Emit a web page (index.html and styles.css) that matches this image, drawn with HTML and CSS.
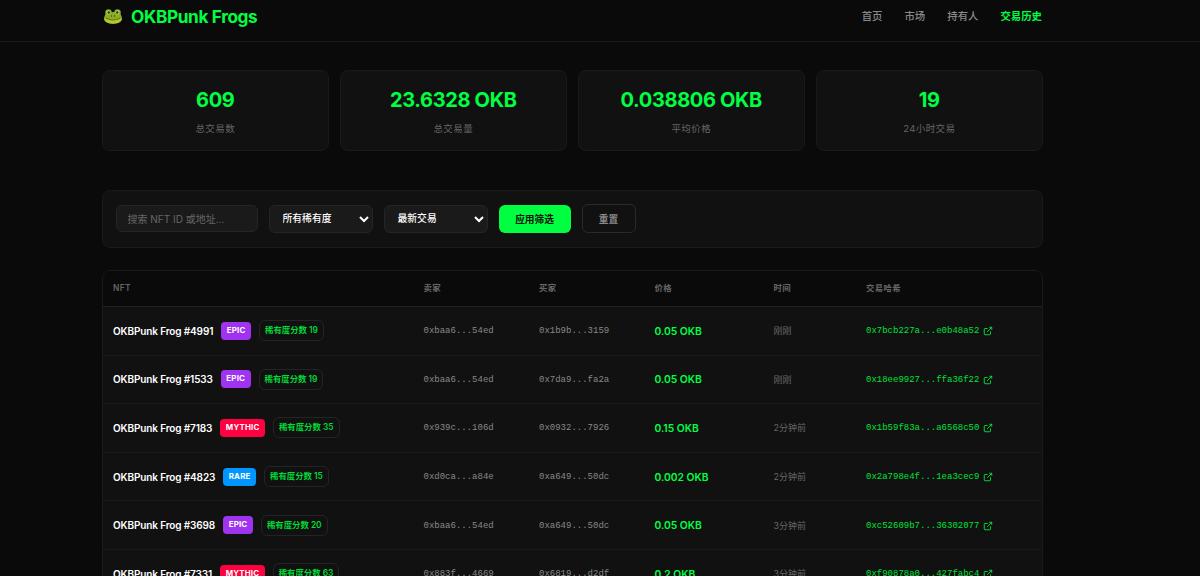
FILE: index.html
```html
<!DOCTYPE html>
<html lang="zh-CN">
	<head>
		<meta charset="UTF-8">
		<title>OKBPunk Frogs</title>
		<link rel="stylesheet" href="styles.css">
	</head>
	<body>
		<svg class="symbols">
			<symbol id="link" viewBox="0 0 24 24">
				<path d="M18 13v6a2 2 0 0 1-2 2H5a2 2 0 0 1-2-2V8a2 2 0 0 1 2-2h6M15 3h6v6M10 14L21 3"/>
			</symbol>
		</svg>
		<header class="header">
			<div class="container nav">
				<div class="logo">
					<svg class="frog" viewBox="0 0 36 30">
						<circle cx="9" cy="7" r="6.5" fill="#86ad28"/>
						<circle cx="27" cy="7" r="6.5" fill="#86ad28"/>
						<path d="M3 10Q18 2 33 10Q36 16 36 20C33 33 3 33 0 20Q0 16 3 10" fill="#8dac25"/>
						<path d="M0 19Q18 27 36 19Q34 29 18 29Q2 29 0 19" fill="#b5c82e"/>
						<circle cx="9" cy="7" r="3.8" fill="#d5dc7c"/>
						<circle cx="27" cy="7" r="3.8" fill="#d5dc7c"/>
						<circle cx="9.5" cy="7" r="2.5" fill="#263010"/>
						<circle cx="26.5" cy="7" r="2.5" fill="#263010"/>
						<path d="M4 18Q18 26 32 18" fill="none" stroke="#526e18" stroke-width="1.5"/>
						<circle cx="15" cy="14" r="1.4" fill="#34500f"/>
						<circle cx="21" cy="14" r="1.4" fill="#34500f"/>
					</svg>
					<span>OKBPunk Frogs</span>
				</div>
				<nav class="menu">
					<a href="#">首页</a>
					<a href="#">市场</a>
					<a href="#">持有人</a>
					<a href="#" class="active">交易历史</a>
				</nav>
			</div>
		</header>
		<main class="container">
			<div class="stats">
				<div class="stat"><div class="num">609</div><div class="label">总交易数</div></div>
				<div class="stat"><div class="num">23.6328 OKB</div><div class="label">总交易量</div></div>
				<div class="stat"><div class="num">0.038806 OKB</div><div class="label">平均价格</div></div>
				<div class="stat"><div class="num">19</div><div class="label">24小时交易</div></div>
			</div>
			<div class="filters">
				<input class="search" type="text" placeholder="搜索 NFT ID 或地址...">
				<select class="select"><option>所有稀有度</option></select>
				<select class="select"><option>最新交易</option></select>
				<button class="btn apply">应用筛选</button>
				<button class="btn reset">重置</button>
			</div>
			<div class="table-box">
				<table class="table">
					<thead>
						<tr>
							<th class="c-nft">NFT</th>
							<th class="c-addr">卖家</th>
							<th class="c-addr">买家</th>
							<th class="c-price">价格</th>
							<th class="c-time">时间</th>
							<th>交易哈希</th>
						</tr>
					</thead>
					<tbody>
						<tr>
							<td><div class="nft"><b>OKBPunk Frog #4991</b><span class="tag epic">EPIC</span><span class="score">稀有度分数 19</span></div></td>
							<td class="addr">0xbaa6...54ed</td>
							<td class="addr">0x1b9b...3159</td>
							<td class="price">0.05 OKB</td>
							<td class="time">刚刚</td>
							<td><a class="hash" href="#">0x7bcb227a...e0b48a52<svg class="icon"><use href="#link"/></svg></a></td>
						</tr>
						<tr>
							<td><div class="nft"><b>OKBPunk Frog #1533</b><span class="tag epic">EPIC</span><span class="score">稀有度分数 19</span></div></td>
							<td class="addr">0xbaa6...54ed</td>
							<td class="addr">0x7da9...fa2a</td>
							<td class="price">0.05 OKB</td>
							<td class="time">刚刚</td>
							<td><a class="hash" href="#">0x18ee9927...ffa36f22<svg class="icon"><use href="#link"/></svg></a></td>
						</tr>
						<tr>
							<td><div class="nft"><b>OKBPunk Frog #7183</b><span class="tag mythic">MYTHIC</span><span class="score">稀有度分数 35</span></div></td>
							<td class="addr">0x939c...106d</td>
							<td class="addr">0x0932...7926</td>
							<td class="price">0.15 OKB</td>
							<td class="time">2分钟前</td>
							<td><a class="hash" href="#">0x1b59f83a...a6568c50<svg class="icon"><use href="#link"/></svg></a></td>
						</tr>
						<tr>
							<td><div class="nft"><b>OKBPunk Frog #4823</b><span class="tag rare">RARE</span><span class="score">稀有度分数 15</span></div></td>
							<td class="addr">0xd0ca...a84e</td>
							<td class="addr">0xa649...50dc</td>
							<td class="price">0.002 OKB</td>
							<td class="time">2分钟前</td>
							<td><a class="hash" href="#">0x2a798e4f...1ea3cec9<svg class="icon"><use href="#link"/></svg></a></td>
						</tr>
						<tr>
							<td><div class="nft"><b>OKBPunk Frog #3698</b><span class="tag epic">EPIC</span><span class="score">稀有度分数 20</span></div></td>
							<td class="addr">0xbaa6...54ed</td>
							<td class="addr">0xa649...50dc</td>
							<td class="price">0.05 OKB</td>
							<td class="time">3分钟前</td>
							<td><a class="hash" href="#">0xc52609b7...36302077<svg class="icon"><use href="#link"/></svg></a></td>
						</tr>
						<tr>
							<td><div class="nft"><b>OKBPunk Frog #7331</b><span class="tag mythic">MYTHIC</span><span class="score">稀有度分数 63</span></div></td>
							<td class="addr">0x883f...4669</td>
							<td class="addr">0x6819...d2df</td>
							<td class="price">0.2 OKB</td>
							<td class="time">3分钟前</td>
							<td><a class="hash" href="#">0xf90878a0...427fabc4<svg class="icon"><use href="#link"/></svg></a></td>
						</tr>
					</tbody>
				</table>
			</div>
		</main>
	</body>
</html>
```
FILE: styles.css
```css
*{
	margin: 0;
	padding: 0;
	box-sizing: border-box;
}
body{
	height: 576px;
	overflow: hidden;
	background: #0a0a0a;
	color: #fff;
	font-family: Inter, "Noto Sans CJK SC", sans-serif;
	font-size: 10px;
}
a{
	text-decoration: none;
}
.symbols{
	display: none;
}
.container{
	width: 941.5px;
	margin-left: 101.5px;
}
.header{
	height: 42px;
	border-bottom: 1px solid #1a1a1a;
}
.nav{
	display: flex;
	justify-content: space-between;
	height: 32px;
	align-items: center;
}
.logo{
	display: flex;
	align-items: center;
	gap: 9px;
	padding-left: 2.5px;
	color: #00ff41;
	font-size: 17.2px;
	font-weight: 700;
	letter-spacing: -.35px;
}
.frog{
	width: 18px;
	height: 15px;
}
.menu{
	display: flex;
	gap: 22px;
	padding-right: 1px;
	padding-bottom: 1px;
}
.menu a{
	color: #888;
	font-size: 10.4px;
	font-weight: 500;
}
.menu .active{
	color: #00ff41;
	font-weight: 600;
}
.stats{
	display: grid;
	grid-template-columns: repeat(4, 1fr);
	gap: 10.5px;
	margin-top: 28px;
}
.stat{
	height: 81px;
	padding-top: 17px;
	background: #111;
	border: 1px solid #1a1a1a;
	border-radius: 8px;
	text-align: center;
}
.num{
	color: #00ff41;
	font-size: 20px;
	font-weight: 700;
	line-height: 24px;
	letter-spacing: -.35px;
}
.label{
	margin-top: 10px;
	color: #666;
	font-size: 9.5px;
	line-height: 14px;
	letter-spacing: .4px;
}
.filters{
	display: flex;
	align-items: center;
	gap: 11px;
	height: 58px;
	margin-top: 39px;
	padding: 0 13.5px 1px;
	background: #111;
	border: 1px solid #1a1a1a;
	border-radius: 8px;
}
.search, .select{
	height: 28px;
	background: #1a1a1a;
	border: 1px solid #252525;
	border-radius: 6px;
	color: #fff;
	font-family: inherit;
	font-size: 10px;
}
.search{
	width: 141.5px;
	height: 27px;
	padding: 0 10.5px;
}
.search::placeholder{
	color: #666;
}
.select{
	width: 104px;
	padding-left: 9px;
	font-size: 9.8px;
	font-weight: 500;
}
.btn{
	height: 28px;
	border: 0;
	border-radius: 6px;
	font-family: inherit;
	font-size: 9.7px;
	font-weight: 600;
}
.apply{
	width: 72px;
	background: #00ff41;
	color: #0a0a0a;
}
.reset{
	width: 54px;
	height: 29px;
	background: transparent;
	border: 1px solid #2a2a2a;
	color: #888;
}
.table-box{
	margin-top: 22px;
	background: #111;
	border: 1px solid #1a1a1a;
	border-radius: 8px;
	overflow: hidden;
}
.table{
	width: 100%;
	table-layout: fixed;
	border-spacing: 0;
}
th{
	height: 36px;
	padding-left: 10.5px;
	padding-bottom: 1px;
	background: #0a0a0a;
	border-bottom: 1px solid #1f1f1f;
	color: #666;
	font-size: 8.4px;
	font-weight: 600;
	line-height: 12px;
	text-align: left;
	letter-spacing: .35px;
}
td{
	height: 48.6px;
	padding-left: 10.5px;
	border-bottom: 1px solid #191919;
}
.c-nft{
	width: 310.5px;
}
.c-addr{
	width: 115.5px;
}
.c-price{
	width: 119px;
}
.c-time{
	width: 92.5px;
}
.nft{
	display: flex;
	align-items: center;
	white-space: nowrap;
}
.nft b{
	font-size: 10px;
	font-weight: 600;
	letter-spacing: -.13px;
}
.tag{
	height: 18px;
	margin-left: 8px;
	padding: 0 5.5px;
	border-radius: 4px;
	font-size: 7.9px;
	font-weight: 700;
	line-height: 17px;
	letter-spacing: .2px;
}
.epic{
	background: #a033f0;
}
.mythic{
	background: #ff0040;
}
.rare{
	background: #0096ff;
}
.score{
	height: 21px;
	margin-left: 8px;
	padding: 0 5px;
	border: 1px solid #242424;
	border-radius: 6px;
	color: #00d936;
	font-size: 8.4px;
	font-weight: 600;
	line-height: 19px;
}
.addr{
	padding-top: 1px;
	color: #888;
	font-family: "Courier New", "Liberation Mono", monospace;
	font-size: 9px;
}
.price{
	color: #00ff41;
	font-size: 10.3px;
	font-weight: 600;
}
.time{
	color: #666;
	font-size: 9px;
}
.hash{
	display: flex;
	align-items: center;
	gap: 4px;
	padding-top: 1px;
	color: #00e03a;
	font-family: "Courier New", "Liberation Mono", monospace;
	font-size: 9px;
}
.icon{
	width: 10px;
	height: 10px;
	fill: none;
	stroke: #00ff41;
	stroke-width: 2;
}
```
